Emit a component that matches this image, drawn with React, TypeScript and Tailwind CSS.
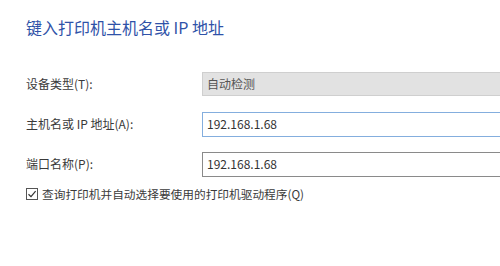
import React from 'react';

const font = { fontFamily: '"Microsoft YaHei", "Noto Sans CJK SC", "Noto Sans", sans-serif' };

function Row({ label, children }: { label: string; children: React.ReactNode }) {
  return (
    <div className="flex items-center h-[24px]">
      <label className="w-[176px] shrink-0 text-[12px] text-[#3a3a3a]">{label}</label>
      {children}
    </div>
  );
}

export default function App() {
  return (
    <div className="w-[500px] h-[266px] bg-white overflow-hidden pl-[26px]" style={font}>
      {/* Heading */}
      <h1 className="pt-[16px] text-[16px] leading-[22px] text-[#2f52a8]">键入打印机主机名或 IP 地址</h1>

      <div className="mt-[34px] flex flex-col gap-[16px]">
        <Row label="设备类型(T):">
          <div className="w-[320px] shrink-0 h-[24px] bg-[#e2e2e2] border border-[#cfcfcf] flex items-center pl-[4px] text-[12px] text-[#555]">
            自动检测
          </div>
        </Row>
        <Row label="主机名或 IP 地址(A):">
          <div className="w-[320px] shrink-0 h-[25px] bg-white border border-[#84aede] flex items-center pl-[4px] text-[12px] text-[#333]">
            192.168.1.68
          </div>
        </Row>
        <Row label="端口名称(P):">
          <div className="w-[320px] shrink-0 h-[25px] bg-white border border-[#8a8a8a] flex items-center pl-[4px] text-[12px] text-[#333]">
            192.168.1.68
          </div>
        </Row>
      </div>

      {/* Checkbox */}
      <div className="mt-[9px] flex items-center gap-[4px] text-[11.7px] text-[#3a3a3a]">
        <span className="w-[12px] h-[12px] border border-[#555] bg-white flex items-center justify-center">
          <svg width="10" height="10" viewBox="0 0 10 10" fill="none">
            <path d="M1.5 5.2 L4 7.6 L8.6 2.2" stroke="#333" strokeWidth="1.2" />
          </svg>
        </span>
        <span>查询打印机并自动选择要使用的打印机驱动程序(Q)</span>
      </div>
    </div>
  );
}
